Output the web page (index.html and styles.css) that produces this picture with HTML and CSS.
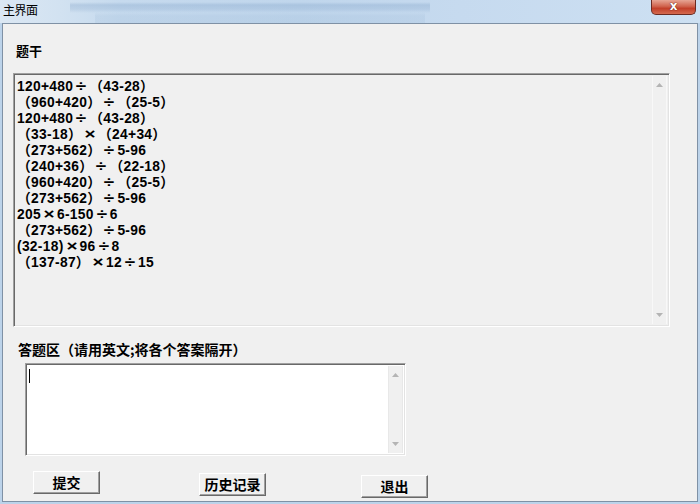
FILE: index.html
```html
<!DOCTYPE html>
<html lang="zh-CN">
<head>
<meta charset="utf-8">
<title>主界面</title>
<link rel="stylesheet" href="styles.css">
</head>
<body>
<div class="window">
  <div class="titlebar">
    <div class="title">主界面</div>
    <div class="close"><span class="close-x">x</span></div>
  </div>
  <div class="client">
    <div class="label label-stem">题干</div>
    <div class="textbox textbox-stem">
      <div class="textbox-content problems">
        <div class="line">120+480<span class="op">÷</span>（43-28）</div>
        <div class="line">（960+420）<span class="op">÷</span>（25-5）</div>
        <div class="line">120+480<span class="op">÷</span>（43-28）</div>
        <div class="line">（33-18）<span class="op">×</span>（24+34）</div>
        <div class="line">（273+562）<span class="op">÷</span>5-96</div>
        <div class="line">（240+36）<span class="op">÷</span>（22-18）</div>
        <div class="line">（960+420）<span class="op">÷</span>（25-5）</div>
        <div class="line">（273+562）<span class="op">÷</span>5-96</div>
        <div class="line">205<span class="op">×</span>6-150<span class="op">÷</span>6</div>
        <div class="line">（273+562）<span class="op">÷</span>5-96</div>
        <div class="line">(32-18)<span class="op">×</span>96<span class="op">÷</span>8</div>
        <div class="line">（137-87）<span class="op">×</span>12<span class="op">÷</span>15</div>
      </div>
      <div class="scrollbar">
        <svg class="arrow" width="7" height="4" viewBox="0 0 7 4"><polygon points="3.5,0 7,4 0,4" fill="#b4b4b4"/></svg>
        <svg class="arrow" width="7" height="4" viewBox="0 0 7 4"><polygon points="0,0 7,0 3.5,4" fill="#b4b4b4"/></svg>
      </div>
    </div>
    <div class="label label-answer">答题区（请用英文;将各个答案隔开）</div>
    <div class="textbox textbox-answer">
      <div class="textbox-content answer"><span class="caret"></span></div>
      <div class="scrollbar scrollbar-light">
        <svg class="arrow" width="7" height="4" viewBox="0 0 7 4"><polygon points="3.5,0 7,4 0,4" fill="#b4b4b4"/></svg>
        <svg class="arrow" width="7" height="4" viewBox="0 0 7 4"><polygon points="0,0 7,0 3.5,4" fill="#b4b4b4"/></svg>
      </div>
    </div>
    <div class="buttons">
      <div class="btn btn-submit">提交</div>
      <div class="btn btn-history">历史记录</div>
      <div class="btn btn-exit">退出</div>
    </div>
  </div>
</div>
</body>
</html>
```

FILE: styles.css
```css
html, body {
  margin: 0;
  padding: 0;
}
body {
  width: 700px;
  height: 504px;
  overflow: hidden;
  background: #bcd3ea;
  font-family: "Noto Sans CJK SC", "Noto Sans", sans-serif;
  color: #000;
}
.window {
  width: 700px;
  height: 504px;
  display: flex;
  flex-direction: column;
}
.titlebar {
  height: 23px;
  flex: none;
  display: flex;
  justify-content: space-between;
  align-items: flex-start;
  background:
    linear-gradient(to bottom, rgba(255,255,255,0) 2px, rgba(120,155,195,0.30) 5px, rgba(120,155,195,0.22) 9px, rgba(255,255,255,0) 13px) 70px 0 / 360px 23px no-repeat,
    linear-gradient(to bottom, rgba(255,255,255,0) 12px, rgba(150,180,210,0.18) 16px, rgba(150,180,210,0.18) 23px) 95px 0 / 330px 23px no-repeat,
    linear-gradient(to right, #dbe7f3 0, #d2e2f1 60px, #c6daee 120px, #c0d6ec 300px, #c6daef 460px, #cde0f2 700px);
}
.title {
  padding: 2px 0 0 3px;
  font-size: 12px;
  line-height: 15px;
  letter-spacing: -0.5px;
}
.close {
  width: 43px;
  height: 14px;
  margin-right: 4px;
  border: 1px solid #6b2b22;
  border-top: none;
  border-radius: 0 0 5px 5px;
  background: linear-gradient(to bottom, #e6a594 0, #d0644e 45%, #c2402a 60%, #d46a4f 100%);
  display: flex;
  justify-content: center;
  align-items: center;
}
.close-x {
  color: #fff;
  font-family: "DejaVu Sans", sans-serif;
  font-weight: bold;
  font-size: 12px;
  line-height: 12px;
  margin-top: -2px;
  text-shadow: 0 0 1px #5a1a10, 0 0 1px #5a1a10;
}
.client {
  margin: 0 2px;
  height: 479px;
  flex: none;
  box-sizing: border-box;
  border: 1px solid #7f91a5;
  background: #f0f0f0;
  display: flex;
  flex-direction: column;
  align-items: flex-start;
  overflow: hidden;
}
.label {
  font-weight: bold;
  line-height: 16px;
  white-space: nowrap;
}
.label-stem {
  font-size: 13px;
  margin: 19px 0 0 13px;
}
.label-answer {
  font-size: 14px;
  margin: 14px 0 0 15px;
}
.textbox {
  box-sizing: border-box;
  display: flex;
  flex: none;
  border-top: 1px solid #a0a0a0;
  border-left: 1px solid #a0a0a0;
  border-right: 1px solid #ffffff;
  border-bottom: 1px solid #ffffff;
  box-shadow: inset 1px 1px 0 #696969, inset -1px -1px 0 #e3e3e3;
  padding: 2px;
  overflow: hidden;
}
.textbox-stem {
  margin: 14px 0 0 10px;
  width: 657px;
  height: 254px;
  background: #f0f0f0;
}
.textbox-answer {
  margin: 6px 0 0 22px;
  width: 381px;
  height: 93px;
  background: #ffffff;
}
.textbox-content {
  flex: 1;
  min-width: 0;
}
.problems {
  padding: 2px 0 0 1px;
  font-family: "Liberation Sans", "Noto Sans CJK SC", sans-serif;
  font-size: 13.8px;
  font-weight: bold;
  line-height: 16px;
  letter-spacing: 0.3px;
}
.line {
  white-space: nowrap;
  height: 16px;
}
.op {
  display: inline-block;
  width: 16px;
  text-align: center;
  font-size: 14px;
  line-height: 16px;
  letter-spacing: 0;
  transform: scaleX(1.35);
}
.answer {
  padding: 3px 0 0 1px;
}
.caret {
  display: block;
  width: 1px;
  height: 14px;
  background: #000;
}
.scrollbar {
  width: 15px;
  flex: none;
  box-sizing: border-box;
  border-left: 1px solid #f8f8f8;
  border-right: 1px solid #f8f8f8;
  display: flex;
  flex-direction: column;
  justify-content: space-between;
  align-items: center;
  padding: 7px 0 7px;
}
.scrollbar-light {
  background: #f0f0f0;
  border-left: 1px solid #e8e8e8;
  border-right: 1px solid #e8e8e8;
}
.arrow {
  display: block;
}
.buttons {
  display: flex;
  align-items: flex-start;
  margin: 15px 0 0 30px;
}
.btn {
  width: 67px;
  height: 23px;
  flex: none;
  box-sizing: border-box;
  border-top: 1px solid #ffffff;
  border-left: 1px solid #ffffff;
  border-right: 1px solid #696969;
  border-bottom: 1px solid #696969;
  box-shadow: inset -1px -1px 0 #a0a0a0;
  background: #f0f0f0;
  font-size: 14px;
  font-weight: bold;
  line-height: 20px;
  text-align: center;
  white-space: nowrap;
}
.btn-history {
  margin: 2px 0 0 99px;
}
.btn-exit {
  margin: 4px 0 0 95px;
}
```
